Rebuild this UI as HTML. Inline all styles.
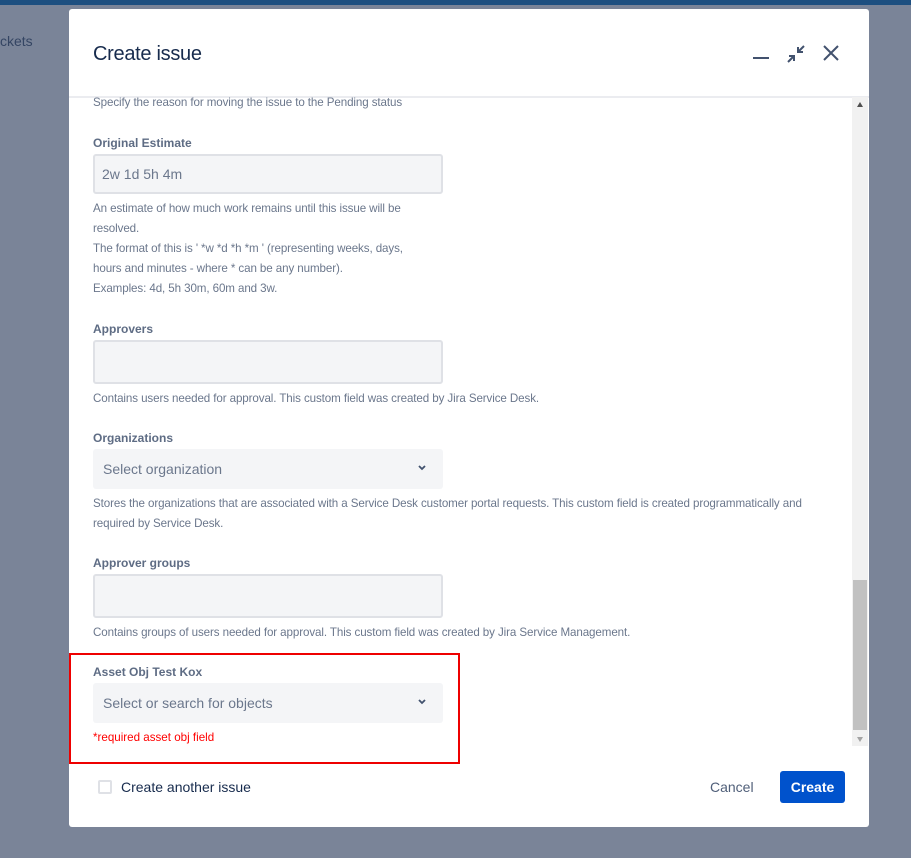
<!DOCTYPE html>
<html><head><style>
*{margin:0;padding:0;box-sizing:border-box}
body{width:911px;height:858px;background:#7a8498;font-family:"Liberation Sans",sans-serif;position:relative;overflow:hidden}
.a{position:absolute}
.lbl{font-size:12px;font-weight:bold;color:#5e6c84}
.hint{font-size:11.6px;color:#6b778c;line-height:20px;letter-spacing:-0.1px}
.inp{background:#f4f5f7;border:2px solid #dfe1e6;border-radius:3px}
.sel{background:#f4f5f7;border-radius:3px;font-size:14px;color:#6b778c;padding-left:10px;display:flex;align-items:center}
</style></head><body>
<div class="a" style="left:0;top:0;width:911px;height:5px;background:#1d4f80"></div>
<div class="a" style="left:0;top:33px;font-size:14px;color:#344563">ckets</div>
<div class="a" style="left:69px;top:9px;width:800px;height:818px;background:#fff;border-radius:3px"></div>
<div class="a" style="left:93px;top:43px;font-size:20px;color:#172b4d;letter-spacing:-0.3px">Create issue</div>
<div class="a" style="left:753px;top:57px;width:16px;height:2px;background:#42526e"></div>
<svg class="a" style="left:786px;top:44px" width="20" height="20" viewBox="0 0 20 20" stroke="#42526e" stroke-width="2" fill="none"><path d="M18 2l-6 6M12 3v5h5M2 18l6-6M8 17v-5H3" /></svg>
<svg class="a" style="left:823px;top:45px" width="16" height="16" viewBox="0 0 16 16" stroke="#42526e" stroke-width="2"><path d="M1 1l14 14M15 1L1 15"/></svg>
<div class="a" style="left:69px;top:96px;width:800px;height:2px;background:#ebecf0"></div>
<div class="a hint" style="left:93px;top:93px">Specify the reason for moving the issue to the Pending status</div>
<div class="a lbl" style="left:93px;top:136px">Original Estimate</div>
<div class="a inp" style="left:93px;top:154px;width:350px;height:40px;font-size:14px;color:#6b778c;padding:10px 0 0 7px">2w 1d 5h 4m</div>
<div class="a hint" style="left:93px;top:199px;width:325px">An estimate of how much work remains until this issue will be resolved.<br>The format of this is ' *w *d *h *m ' (representing weeks, days, hours and minutes - where * can be any number).<br>Examples: 4d, 5h 30m, 60m and 3w.</div>
<div class="a lbl" style="left:93px;top:322px">Approvers</div>
<div class="a inp" style="left:93px;top:340px;width:350px;height:44px"></div>
<div class="a hint" style="left:93px;top:389px">Contains users needed for approval. This custom field was created by Jira Service Desk.</div>
<div class="a lbl" style="left:93px;top:431px">Organizations</div>
<div class="a sel" style="left:93px;top:449px;width:350px;height:40px">Select organization</div>
<svg class="a" style="left:417px;top:464px" width="10" height="8"><path d="M2 2l3 3 3-3" stroke="#42526e" stroke-width="1.8" fill="none"/></svg>
<div class="a hint" style="left:93px;top:494px;width:745px">Stores the organizations that are associated with a Service Desk customer portal requests. This custom field is created programmatically and required by Service Desk.</div>
<div class="a lbl" style="left:93px;top:556px">Approver groups</div>
<div class="a inp" style="left:93px;top:574px;width:350px;height:44px"></div>
<div class="a hint" style="left:93px;top:623px">Contains groups of users needed for approval. This custom field was created by Jira Service Management.</div>
<div class="a lbl" style="left:93px;top:665px">Asset Obj Test Kox</div>
<div class="a sel" style="left:93px;top:683px;width:350px;height:40px">Select or search for objects</div>
<svg class="a" style="left:417px;top:698px" width="10" height="8"><path d="M2 2l3 3 3-3" stroke="#42526e" stroke-width="1.8" fill="none"/></svg>
<div class="a" style="left:93px;top:731px;font-size:11.6px;color:#ff0000">*required asset obj field</div>
<div class="a" style="left:69px;top:653px;width:391px;height:111px;border:2px solid #ee0000"></div>
<div class="a" style="left:852px;top:97px;width:16px;height:649px;background:#f1f1f1"></div>
<div class="a" style="left:853px;top:580px;width:14px;height:150px;background:#c1c1c1"></div>
<div class="a" style="left:857px;top:102px;border:3.5px solid transparent;border-bottom:5px solid #505050;border-top:0"></div>
<div class="a" style="left:857px;top:737px;border:3.5px solid transparent;border-top:5px solid #a3a3a3;border-bottom:0"></div>
<div class="a" style="left:98px;top:780px;width:14px;height:14px;border:2px solid #dfe1e6;border-radius:2px"></div>
<div class="a" style="left:121px;top:779px;font-size:14px;color:#172b4d">Create another issue</div>
<div class="a" style="left:710px;top:779px;font-size:14px;color:#505f79">Cancel</div>
<div class="a" style="left:780px;top:771px;width:65px;height:32px;background:#0052cc;border-radius:3px;color:#fff;font-size:14px;font-weight:bold;text-align:center;line-height:32px">Create</div>
</body></html>
